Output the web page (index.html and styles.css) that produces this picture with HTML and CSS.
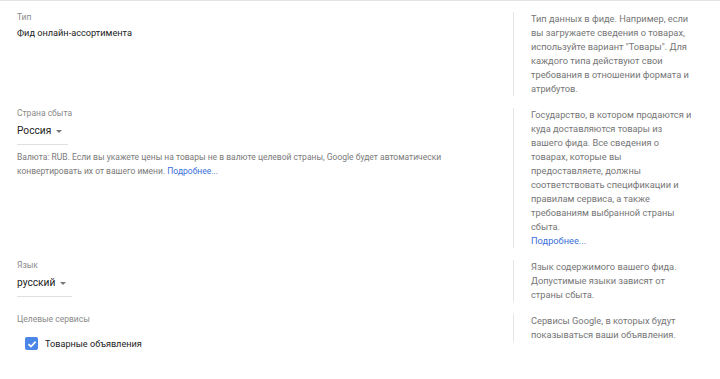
FILE: index.html
```html
<!DOCTYPE html>
<html lang="ru">
<head>
<meta charset="utf-8">
<link rel="stylesheet" href="styles.css">
</head>
<body>
<div class="page">
  <div class="row">
    <div class="main">
      <div class="label">Тип</div>
      <div class="value">Фид онлайн-ассортимента</div>
    </div>
    <div class="help">Тип данных в фиде. Например, если вы загружаете сведения о товарах, используйте вариант "Товары". Для каждого типа действуют свои требования в отношении формата и атрибутов.</div>
  </div>
  <div class="row">
    <div class="main">
      <div class="label">Страна сбыта</div>
      <div class="select"><span>Россия</span><span class="arrow"></span></div>
      <div class="note">Валюта: RUB. Если вы укажете цены на товары не в валюте целевой страны, Google будет автоматически конвертировать их от вашего имени. <a class="link" href="#">Подробнее...</a></div>
    </div>
    <div class="help">Государство, в котором продаются и куда доставляются товары из вашего фида. Все сведения о товарах, которые вы предоставляете, должны соответствовать спецификации и правилам сервиса, а также требованиям выбранной страны сбыта.<br><a class="link" href="#">Подробнее...</a></div>
  </div>
  <div class="row">
    <div class="main">
      <div class="label">Язык</div>
      <div class="select"><span>русский</span><span class="arrow"></span></div>
    </div>
    <div class="help">Язык содержимого вашего фида. Допустимые языки зависят от страны сбыта.</div>
  </div>
  <div class="row">
    <div class="main">
      <div class="label">Целевые сервисы</div>
      <label class="check"><span class="box"><svg viewBox="0 0 12 12" width="12" height="12"><path d="M2.5 6.2 L5 8.6 L9.6 3.6" fill="none" stroke="#fff" stroke-width="1.6"/></svg></span><span>Товарные объявления</span></label>
    </div>
    <div class="help">Сервисы Google, в которых будут показываться ваши объявления.</div>
  </div>
</div>
</body>
</html>
```
FILE: styles.css
```css
html, body {
  margin: 0;
  padding: 0;
  background: #fff;
}
body {
  font-family: Roboto, "Noto Sans", Arial, sans-serif;
  color: #212121;
  width: 720px;
  height: 379px;
  overflow: hidden;
}
.page {
  border-top: 1px solid #e3e3e3;
  padding-top: 11px;
  display: flex;
  flex-direction: column;
  gap: 12px;
}
.row {
  display: flex;
  align-items: flex-start;
}
.main {
  width: 496px;
  padding-left: 17px;
  box-sizing: content-box;
}
.label {
  font-size: 8.5px;
  color: #8a8a8a;
  line-height: 11px;
}
.value {
  font-size: 9.2px;
  line-height: 14px;
  margin-top: 3px;
  color: #222;
}
.select {
  display: inline-flex;
  align-items: center;
  font-size: 10.2px;
  line-height: 16px;
  margin-top: 2px;
  padding-bottom: 5px;
  padding-right: 6px;
  border-bottom: 1px solid #e0e0e0;
  color: #222;
}
.arrow {
  width: 0;
  height: 0;
  border-left: 3.5px solid transparent;
  border-right: 3.5px solid transparent;
  border-top: 3.5px solid #777;
  margin-left: 5px;
}
.note {
  font-size: 8.5px;
  line-height: 14px;
  color: #7a7a7a;
  margin-top: 5px;
  width: 460px;
}
.link {
  color: #3b6fd8;
  text-decoration: none;
}
.help {
  border-left: 1px solid #e6e6e6;
  padding-left: 17px;
  width: 162px;
  font-size: 9.25px;
  line-height: 14px;
  color: #767676;
}
.check {
  display: flex;
  align-items: center;
  margin-top: 12px;
  margin-left: 8px;
  font-size: 9.15px;
  color: #222;
}
.box {
  width: 13px;
  height: 13px;
  background: #4a86e8;
  border-radius: 2px;
  display: flex;
  align-items: center;
  justify-content: center;
  margin-right: 7px;
}
```
